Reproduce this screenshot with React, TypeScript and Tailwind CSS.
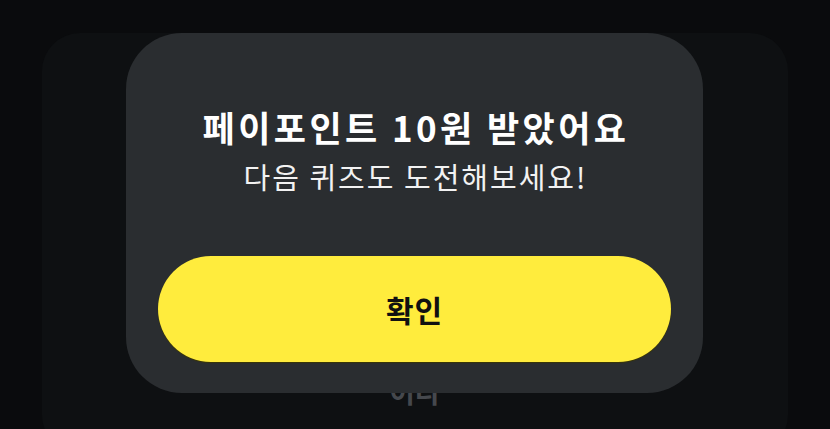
import React from "react";

export default function App() {
  const font = { fontFamily: '"Noto Sans CJK KR", "Noto Sans", sans-serif' };
  return (
    <div className="relative w-[830px] h-[429px] overflow-hidden bg-[#0a0b0d]" style={font}>
      <div className="mx-[42px] mt-[33px] h-[420px] rounded-[38px] bg-[#0e1012] flex flex-col items-center pt-[338px]">
        <div className="text-[28px] leading-[40px] font-bold text-[#45484d]">이다</div>
      </div>
      <div className="absolute left-[126px] top-[33px] w-[577px] h-[360px] rounded-[56px] bg-[#2a2d30] flex flex-col items-center px-[32px] pt-[72px]">
        <div className="text-[35px] leading-[44px] font-bold text-white tracking-[3.4px] pl-[3px]">페이포인트 10원 받았어요</div>
        <div className="mt-[8px] text-[29px] leading-[38px] text-[#f2f2f2] tracking-[2px] pl-[2px]">다음 퀴즈도 도전해보세요!</div>
        <button className="mt-[61px] w-full h-[106px] rounded-full bg-[#ffec3d] shadow-[0_1px_1px_rgba(60,55,0,0.9)] flex items-center justify-center text-[30px] font-bold text-[#111111] tracking-[1px]">
          확인
        </button>
      </div>
    </div>
  );
}
